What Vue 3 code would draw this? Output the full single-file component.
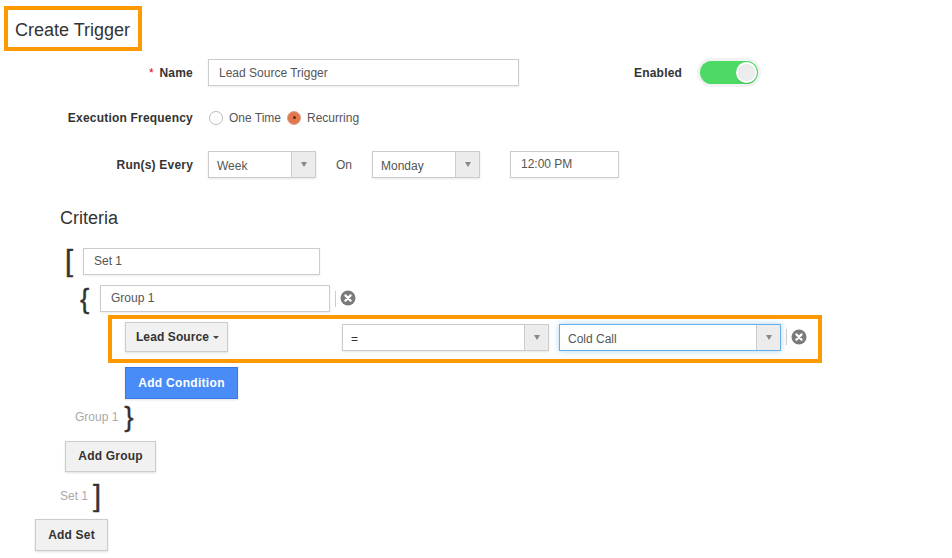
<script setup>
const title = 'Create Trigger'
</script>

<template>
  <div class="page">
    <div class="title-wrap"><h1 class="title">{{ title }}</h1></div>

    <div class="row row-name">
      <label class="label"><span class="req">*</span> Name</label>
      <div class="input w-name">Lead Source Trigger</div>
      <span class="enabled">Enabled</span>
      <div class="toggle"><span class="knob"></span></div>
    </div>

    <div class="row row-freq">
      <label class="label">Execution Frequency</label>
      <span class="radio"></span>
      <span class="radio-text first">One Time</span>
      <span class="radio on"><i></i></span>
      <span class="radio-text">Recurring</span>
    </div>

    <div class="row row-run">
      <label class="label">Run(s) Every</label>
      <div class="select w-sel"><span>Week</span><b class="caret"></b></div>
      <span class="on-text">On</span>
      <div class="select w-sel"><span>Monday</span><b class="caret"></b></div>
      <div class="input w-time">12:00 PM</div>
    </div>

    <h2 class="criteria">Criteria</h2>

    <div class="row row-set">
      <span class="brace brace-set">[</span>
      <div class="input w-set">Set 1</div>
    </div>

    <div class="row row-group">
      <span class="brace brace-group">{</span>
      <div class="input w-group">Group 1</div>
      <span class="divider"></span>
      <span class="close up"><svg viewBox="0 0 16 16" width="16" height="16"><circle cx="8" cy="8" r="7.5" fill="#7a7a7a"/><path d="M5.4 5.4l5.2 5.2M10.6 5.4l-5.2 5.2" stroke="#fff" stroke-width="2.2" stroke-linecap="round"/></svg></span>
    </div>

    <div class="cond">
      <div class="btn lead">Lead Source <b class="mini-caret"></b></div>
      <div class="select w-op"><span class="eq">=</span><b class="caret"></b></div>
      <div class="select w-val focus"><span>Cold Call</span><b class="caret"></b></div>
      <span class="divider d2"></span>
      <span class="close"><svg viewBox="0 0 16 16" width="16" height="16"><circle cx="8" cy="8" r="7.5" fill="#7a7a7a"/><path d="M5.4 5.4l5.2 5.2M10.6 5.4l-5.2 5.2" stroke="#fff" stroke-width="2.2" stroke-linecap="round"/></svg></span>
    </div>

    <div class="btn primary">Add Condition</div>

    <div class="row row-gend">
      <span class="muted">Group 1</span>
      <span class="brace brace-gend">}</span>
    </div>

    <div class="btn add-group">Add Group</div>

    <div class="row row-send">
      <span class="muted">Set 1</span>
      <span class="brace brace-send">]</span>
    </div>

    <div class="btn add-set">Add Set</div>
  </div>
</template>

<style>
html, body { margin: 0; background: #fff; }
</style>

<style scoped>
.page {
  width: 952px;
  height: 558px;
  overflow: hidden;
  box-sizing: border-box;
  padding-top: 6px;
  font-family: "Liberation Sans", Arial, sans-serif;
  font-size: 12px;
  color: #333;
  background: #fff;
}
.title-wrap { margin-left: 4px; width: 138px; height: 45px; box-sizing: border-box; border: 4px solid #f90; display: flex; align-items: center; padding-top: 2px; }
.title { margin: 0 0 0 7px; font-size: 18px; font-weight: 400; line-height: 1; color: #333; }
.row { display: flex; align-items: center; }
.row-name { margin-top: 8px; height: 27px; }
.label { width: 193px; text-align: right; font-weight: 700; color: #333; flex: none; letter-spacing: .2px; }
.req { color: #e2001a; font-weight: 400; margin-right: 2px; }
.input {
  box-sizing: border-box; height: 27px; line-height: 25px; padding-left: 10px;
  border: 1px solid #ccc; background: #fff; color: #555;
  box-shadow: 0 1px 2px rgba(0,0,0,.08); flex: none;
}
.w-name { width: 311px; margin-left: 15px; line-height: 27px; }
.enabled { margin-left: 115px; font-weight: 700; width: 47px; letter-spacing: .2px; white-space: nowrap; }
.toggle {
  margin-left: 19px; width: 58px; height: 23px; box-sizing: border-box; border-radius: 12px;
  background: #4cd964; box-shadow: 0 0 0 3px #f2f2f2; display: flex; align-items: center; justify-content: flex-end; padding-right: 1px;
}
.knob { width: 21px; height: 21px; border-radius: 50%; background: radial-gradient(circle, #ececec 55%, #fff 62%); box-shadow: 0 1px 1px rgba(0,0,0,.15); }
.row-freq { margin-top: 18px; height: 27px; }
.radio { width: 12px; height: 12px; border: 1px solid #bbb; border-radius: 50%; background: #fff; flex: none; margin-left: 16px; display: flex; align-items: center; justify-content: center; }
.radio.on { margin-left: 6px; background: #e2774f; border-color: #d9a08c; }
.radio.on i { width: 3px; height: 3px; border-radius: 50%; background: #5b2c1d; }
.radio-text { margin-left: 6px; color: #555; }
.row-run { margin-top: 20px; height: 27px; }
.select {
  box-sizing: border-box; height: 27px; border: 1px solid #ccc; display: flex; align-items: center; justify-content: space-between;
  background: #fff; color: #555; box-shadow: 0 1px 2px rgba(0,0,0,.1); padding-left: 8px; flex: none;
}
.select span { padding-top: 2px; }
.caret {
  width: 24px; align-self: stretch; background: #ececec; border-left: 1px solid #ccc; box-sizing: border-box; flex: none;
  display: flex; align-items: center; justify-content: center;
}
.caret::after { content: ""; width: 0; height: 0; border-left: 3.5px solid transparent; border-right: 3.5px solid transparent; border-top: 5px solid #888; }
.w-sel { width: 108px; }
.row-run .w-sel:first-of-type { margin-left: 15px; }
.on-text { margin-left: 20px; width: 36px; color: #555; }
.w-time { width: 109px; margin-left: 30px; }
.criteria { margin: 28px 0 0 60px; font-size: 18px; font-weight: 400; line-height: 24px; color: #333; }
.row-set { margin-top: 18px; height: 27px; }
.brace { color: #333; line-height: 27px; font-weight: 400; flex: none; }
.brace-set { margin-left: 65px; width: 18px; font-size: 29px; -webkit-text-stroke: .4px #333; }
.w-set { width: 237px; }
.row-group { margin-top: 10px; height: 27px; }
.brace-group { margin-left: 80px; width: 20px; font-size: 28px; -webkit-text-stroke: .3px #333; }
.w-group { width: 230px; }
.divider { width: 1px; height: 16px; background: #ccc; margin-left: 5px; flex: none; }
.close { margin-left: 4px; width: 16px; height: 16px; flex: none; display: block; }
.close.up { margin-bottom: 2px; }
.close svg { display: block; }
.cond {
  margin: 3px 0 0 108px; width: 714px; height: 48px; box-sizing: border-box; border: 4px solid #f90; display: flex; align-items: center; padding: 0 0 4px 13px;
}
.btn {
  box-sizing: border-box; border: 1px solid #ccc; background: #f1f1f1; font-weight: 700; color: #333; letter-spacing: .2px;
  display: flex; align-items: center; justify-content: center; box-shadow: 0 1px 2px rgba(0,0,0,.12); flex: none;
}
.lead { width: 103px; height: 30px; gap: 4px; letter-spacing: .1px; padding-left: 2px; }
.mini-caret { display: inline-block; border-left: 3.5px solid transparent; border-right: 3.5px solid transparent; border-top: 3.5px solid #444; }
.w-op { width: 207px; margin-left: 114px; margin-top: 1px; }
.eq { color: #333; }
.w-val { width: 222px; margin-left: 10px; margin-top: 1px; border-color: #66afe9; box-shadow: 0 0 6px rgba(102,175,233,.55); }
.d2 { margin-left: 5px; }
.primary { margin: 4px 0 0 125px; width: 113px; height: 32px; background: #4a8cf7; border-color: #3b78e7; color: #fff; letter-spacing: .3px; }
.row-gend { margin-top: 4px; height: 28px; padding-left: 75px; }
.muted { color: #aaa; }
.brace-gend { margin-left: 6px; font-size: 28px; line-height: 28px; -webkit-text-stroke: .3px #333; }
.add-group { margin: 10px 0 0 65px; width: 91px; height: 31px; padding-bottom: 2px; }
.row-send { margin-top: 10px; height: 28px; padding-left: 60px; }
.brace-send { margin-left: 5px; font-size: 29px; line-height: 28px; -webkit-text-stroke: .4px #333; }
.add-set { margin: 9px 0 0 35px; width: 73px; height: 32px; }
</style>
